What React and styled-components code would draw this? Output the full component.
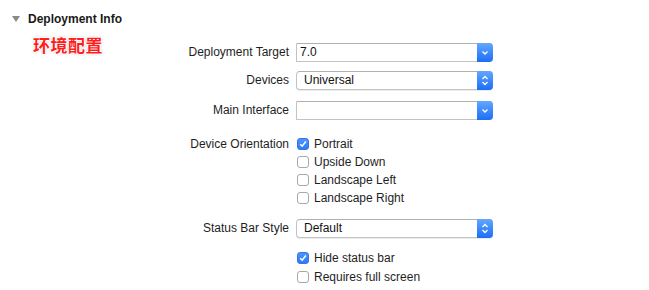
import React from "react";
import styled, { createGlobalStyle } from "styled-components";

const GlobalStyle = createGlobalStyle`
  html, body {
    margin: 0;
    padding: 0;
    background: #fff;
  }
  body {
    font-family: "Liberation Sans", Arial, sans-serif;
    font-size: 12px;
    color: #1e1e1e;
  }
`;

const Page = styled.div`
  position: relative;
  width: 649px;
  height: 290px;
  overflow: hidden;
`;

const Header = styled.div`
  display: flex;
  align-items: center;
  height: 18px;
  padding: 10px 0 0 12px;
  gap: 8px;
  font-weight: bold;
  font-size: 12px;
  color: #1a1a1a;
`;

const Note = styled.div`
  position: absolute;
  left: 33px;
  top: 32px;
  font-family: "Noto Sans CJK SC", sans-serif;
  font-weight: bold;
  font-size: 17px;
  letter-spacing: 0.5px;
  color: #ff1e1e;
  text-shadow: 1px 0 0 #fff, -1px 0 0 #fff, 0 1px 0 #fff, 0 -1px 0 #fff,
    0 0 3px rgba(0, 0, 0, 0.4);
`;

const Form = styled.div`
  display: grid;
  grid-template-columns: 289px 197px;
  column-gap: 7px;
  padding-top: 15px;
`;

const Label = styled.div`
  grid-column: 1;
  text-align: right;
  height: ${(p) => p.$h || 19}px;
  line-height: ${(p) => p.$h || 19}px;
  margin-top: ${(p) => p.$top || 0}px;
  white-space: nowrap;
`;

const Cell = styled.div`
  grid-column: 2;
  margin-top: ${(p) => p.$top || 0}px;
  display: flex;
  flex-direction: column;
`;

const Field = styled.div`
  display: flex;
  height: 19px;
  box-sizing: border-box;
  border: 1px solid #c3c3c3;
  border-top-color: #b0b0b0;
  border-right: none;
  border-radius: ${(p) => (p.$popup ? "4px" : "1px 4px 4px 1px")};
  background: #fff;
  box-shadow: ${(p) => (p.$popup ? "0 1px 0 rgba(0,0,0,0.08)" : "none")};
`;

const FieldText = styled.div`
  flex: 1;
  padding-left: ${(p) => (p.$popup ? 7 : 3)}px;
  line-height: 17px;
  color: #111;
`;

const Arrow = styled.div`
  width: 16px;
  margin: -1px 0;
  border-radius: 0 4px 4px 0;
  background: linear-gradient(#62a7ff, #1c6ef7);
  display: flex;
  align-items: center;
  justify-content: center;
`;

const CheckRow = styled.label`
  display: flex;
  align-items: center;
  gap: 5px;
  height: ${(p) => p.$h || 18}px;
`;

const Box = styled.span`
  width: 12px;
  height: 12px;
  box-sizing: border-box;
  border-radius: 3px;
  margin-left: 1px;
  display: flex;
  align-items: center;
  justify-content: center;
  background: ${(p) => (p.$on ? "linear-gradient(#4f95fb, #2f7af5)" : "#fff")};
  border: 1px solid ${(p) => (p.$on ? "#2f76ea" : "#a8a8a8")};
`;

const Chevron = ({ up }) => (
  <svg width="8" height="11" viewBox="0 0 8 11">
    {up && (
      <path d="M1.5 4 L4 1.5 L6.5 4" fill="none" stroke="#fff" strokeWidth="1.3" />
    )}
    <path
      d={up ? "M1.5 7 L4 9.5 L6.5 7" : "M1.5 4.5 L4 7 L6.5 4.5"}
      fill="none"
      stroke="#fff"
      strokeWidth="1.3"
    />
  </svg>
);

const Select = ({ value, popup }) => (
  <Field $popup={popup}>
    <FieldText $popup={popup}>{value}</FieldText>
    <Arrow>
      <Chevron up={popup} />
    </Arrow>
  </Field>
);

const Check = ({ on, children, h }) => (
  <CheckRow $h={h}>
    <Box $on={on}>
      {on && (
        <svg width="8" height="8" viewBox="0 0 8 8">
          <path d="M1.2 4.2 L3.2 6.2 L6.8 1.5" fill="none" stroke="#fff" strokeWidth="1.5" />
        </svg>
      )}
    </Box>
    {children}
  </CheckRow>
);

export default function App() {
  return (
    <Page>
      <GlobalStyle />
      <Header>
        <svg width="8" height="8" viewBox="0 0 8 8">
          <path d="M0 1 L8 1 L4 7 Z" fill="#8a8a8a" />
        </svg>
        Deployment Info
      </Header>
      <Note>环境配置</Note>
      <Form>
        <Label>Deployment Target</Label>
        <Cell>
          <Select value="7.0" />
        </Cell>

        <Label $top={9}>Devices</Label>
        <Cell $top={9}>
          <Select value="Universal" popup />
        </Cell>

        <Label $top={11}>Main Interface</Label>
        <Cell $top={11}>
          <Select value="" />
        </Cell>

        <Label $top={15} $h={18}>Device Orientation</Label>
        <Cell $top={15}>
          <Check on>Portrait</Check>
          <Check>Upside Down</Check>
          <Check>Landscape Left</Check>
          <Check>Landscape Right</Check>
        </Cell>

        <Label $top={12}>Status Bar Style</Label>
        <Cell $top={12}>
          <Select value="Default" popup />
        </Cell>

        <Label $top={10} />
        <Cell $top={10}>
          <Check on h={19}>Hide status bar</Check>
          <Check h={20}>Requires full screen</Check>
        </Cell>
      </Form>
    </Page>
  );
}
